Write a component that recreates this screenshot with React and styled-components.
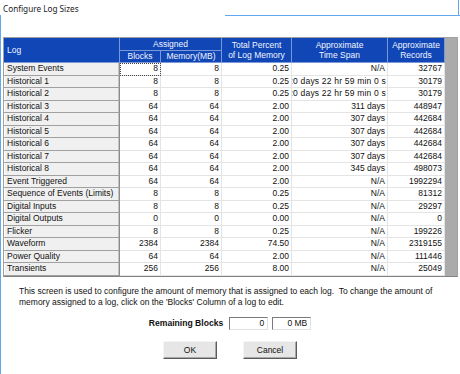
import React from 'react';
import styled, { createGlobalStyle } from 'styled-components';

const Global = createGlobalStyle`
  html, body { margin: 0; padding: 0; background: #fff; }
  body { font-family: "Liberation Sans", Arial, sans-serif; }
  * { box-sizing: border-box; }
`;

const Page = styled.div`
  position: relative;
  width: 460px;
  height: 374px;
  background: #fff;
  overflow: hidden;
  font-size: 8.5px;
  color: #111;
`;

const EdgeLine = styled.div`
  position: absolute;
  background: #62a8ec;
`;

const Title = styled.div`
  height: 37px;
  padding: 3px 0 0 3px;
  font-family: "Noto Sans", "Liberation Sans", sans-serif;
  font-size: 8.2px;
  line-height: 11px;
  color: #1a1a1a;
`;

const Grid = styled.div`
  margin-left: 3px;
  width: 455px;
  display: grid;
  grid-template-columns: 116px 41px 61px 70px 96px 57px 1fr;
  grid-auto-rows: 12.5px;
  border: 1px solid #a0a0a0;
  border-bottom-color: #828282;
  background: #ababab;
`;

const HeadCell = styled.div`
  grid-column: ${(p) => p.$col};
  grid-row: ${(p) => p.$row};
  background: #1046b6;
  color: #f2f5ff;
  border-right: 1px solid rgba(255, 255, 255, 0.45);
  border-bottom: 1px solid rgba(255, 255, 255, 0.45);
  display: flex;
  align-items: center;
  justify-content: ${(p) => (p.$left ? 'flex-start' : 'center')};
  text-align: center;
  padding-left: ${(p) => (p.$left ? '3px' : '0')};
  line-height: 10.5px;
  font-size: 8.5px;
  white-space: nowrap;
`;

const LogCell = styled.div`
  grid-column: 1;
  background: #f0f0f0;
  border-bottom: 1px solid #a0a0a0;
  border-right: 1px solid #8c8c8c;
  box-shadow: inset -1px 0 0 #c4c4c4, inset 1px 0 0 #fff;
  padding-left: 3px;
  display: flex;
  align-items: center;
  white-space: nowrap;
  overflow: hidden;
  line-height: 11px;
`;

const DataCell = styled.div`
  background: #fff;
  border-right: 1px solid #e4e4e4;
  border-bottom: 1px solid #e4e4e4;
  padding-right: ${(p) => (p.$wide ? '1px' : '2px')};
  display: flex;
  align-items: center;
  justify-content: flex-end;
  white-space: nowrap;
  overflow: hidden;
  line-height: 11px;
  letter-spacing: ${(p) => (p.$wide ? '0.2px' : '0')};
  outline: ${(p) => (p.$focus ? '1px dotted #444' : 'none')};
  outline-offset: -1px;
`;

const Strip = styled.div`
  background: #ababab;
`;

const Description = styled.p`
  margin: 9px 0 0 0;
  padding-left: 19px;
  font-size: 8.5px;
  line-height: 11px;
  color: #111;
`;

const RemainingRow = styled.div`
  display: flex;
  align-items: center;
  justify-content: center;
  margin-top: 9px;
  height: 13px;
`;

const Label = styled.span`
  font-weight: bold;
  font-size: 8.6px;
  margin-right: 6px;
  color: #111;
`;

const Edit = styled.div`
  width: ${(p) => p.$w}px;
  height: 13px;
  margin-left: ${(p) => p.$ml}px;
  border: 1px solid;
  border-color: #7a7a7a #e0e0e0 #e0e0e0 #7a7a7a;
  background: #fff;
  display: flex;
  align-items: center;
  justify-content: flex-end;
  padding-right: 3px;
  font-size: 8.5px;
`;

const Buttons = styled.div`
  display: flex;
  justify-content: center;
  gap: 26px;
  margin-top: 11px;
`;

const Button = styled.button`
  width: 54px;
  height: 18px;
  padding: 0;
  font-family: "Liberation Sans", Arial, sans-serif;
  font-size: 8.5px;
  color: #111;
  background: #e6e6e6;
  border: 1px solid;
  border-color: #f4f4f4 #5a5a5a #5a5a5a #f4f4f4;
  box-shadow: inset -1px -1px 0 #a8a8a8;
`;

const rows = [
  ['System Events', '8', '8', '0.25', 'N/A', '32767'],
  ['Historical 1', '8', '8', '0.25', '20 days 22 hr 59 min 0 s', '30179'],
  ['Historical 2', '8', '8', '0.25', '20 days 22 hr 59 min 0 s', '30179'],
  ['Historical 3', '64', '64', '2.00', '311 days', '448947'],
  ['Historical 4', '64', '64', '2.00', '307 days', '442684'],
  ['Historical 5', '64', '64', '2.00', '307 days', '442684'],
  ['Historical 6', '64', '64', '2.00', '307 days', '442684'],
  ['Historical 7', '64', '64', '2.00', '307 days', '442684'],
  ['Historical 8', '64', '64', '2.00', '345 days', '498073'],
  ['Event Triggered', '64', '64', '2.00', 'N/A', '1992294'],
  ['Sequence of Events (Limits)', '8', '8', '0.25', 'N/A', '81312'],
  ['Digital Inputs', '8', '8', '0.25', 'N/A', '29297'],
  ['Digital Outputs', '0', '0', '0.00', 'N/A', '0'],
  ['Flicker', '8', '8', '0.25', 'N/A', '199226'],
  ['Waveform', '2384', '2384', '74.50', 'N/A', '2319155'],
  ['Power Quality', '64', '64', '2.00', 'N/A', '111446'],
  ['Transients', '256', '256', '8.00', 'N/A', '25049'],
];

export default function App() {
  return (
    <Page>
      <Global />
      <EdgeLine style={{ left: 0, top: 15, width: 1, height: 359 }} />
      <EdgeLine style={{ left: 225, top: 15, width: 235, height: 1 }} />
      <EdgeLine style={{ left: 458, top: 0, width: 1, height: 16 }} />
      <Title>Configure Log Sizes</Title>
      <Grid>
        <HeadCell $col="1" $row="1 / span 2" $left>Log</HeadCell>
        <HeadCell $col="2 / span 2" $row="1">Assigned</HeadCell>
        <HeadCell $col="4" $row="1 / span 2">Total Percent<br />of Log Memory</HeadCell>
        <HeadCell $col="5" $row="1 / span 2">Approximate<br />Time Span</HeadCell>
        <HeadCell $col="6" $row="1 / span 2">Approximate<br />Records</HeadCell>
        <Strip style={{ gridColumn: 7, gridRow: '1 / span 2' }} />
        <HeadCell $col="2" $row="2">Blocks</HeadCell>
        <HeadCell $col="3" $row="2">Memory(MB)</HeadCell>
        {rows.map((r, i) => (
          <React.Fragment key={r[0]}>
            <LogCell>{r[0]}</LogCell>
            <DataCell $focus={i === 0}>{r[1]}</DataCell>
            <DataCell>{r[2]}</DataCell>
            <DataCell>{r[3]}</DataCell>
            <DataCell $wide={r[4].length > 12}><span>{r[4]}</span></DataCell>
            <DataCell>{r[5]}</DataCell>
            <Strip />
          </React.Fragment>
        ))}
      </Grid>
      <Description>
        This screen is used to configure the amount of memory that is assigned to each log.&nbsp; To change the amount of
        <br />
        memory assigned to a log, click on the 'Blocks' Column of a log to edit.
      </Description>
      <RemainingRow>
        <Label>Remaining Blocks</Label>
        <Edit $w={39} $ml={0}>0</Edit>
        <Edit $w={39} $ml={4}>0 MB</Edit>
      </RemainingRow>
      <Buttons>
        <Button>OK</Button>
        <Button>Cancel</Button>
      </Buttons>
    </Page>
  );
}
